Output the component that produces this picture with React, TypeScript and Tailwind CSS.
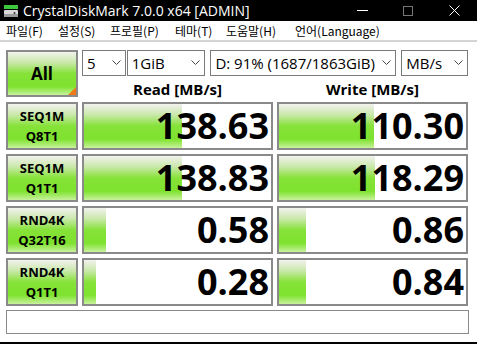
import React from "react";

const font = { fontFamily: '"Open Sans", "Noto Sans", "Noto Sans CJK KR", sans-serif' };
const kfont = { fontFamily: '"Noto Sans CJK KR", "Noto Sans", sans-serif' };

const grad = "bg-[linear-gradient(to_bottom,#f2f2ee_0%,#c8e8a8_25%,#86e238_50%,#7ee22e_80%,#c8f29c_100%)]";

function Label({ a, b }: { a: string; b: string }) {
  return (
    <div className={`h-[48px] border-2 border-[#8a8a8a] ${grad} flex flex-col items-center justify-center leading-[20px] text-[13px] font-bold text-black`} style={font}>
      <span>{a}</span>
      <span>{b}</span>
    </div>
  );
}

function Val({ v, w }: { v: string; w: number }) {
  return (
    <div className="relative h-[48px] border-2 border-[#8a8a8a] bg-white">
      <div className={`absolute left-0 top-0 bottom-0 ${grad}`} style={{ width: w }} />
      <div className="relative h-full flex items-center justify-end pr-[2px] text-[36px] font-bold text-black leading-none" style={font}>
        {v}
      </div>
    </div>
  );
}

function Select({ text, w }: { text: string; w: number }) {
  return (
    <div className="h-[26px] border border-[#7a7a7a] bg-white flex items-center justify-between pl-[4px] pr-[4px] text-[15px] text-black" style={{ width: w, ...font }}>
      <span className="whitespace-nowrap overflow-hidden">{text}</span>
      <svg width="9" height="6" viewBox="0 0 9 6" className="shrink-0 ml-[2px]">
        <path d="M0.5 0.5 L4.5 4.5 L8.5 0.5" fill="none" stroke="#444" strokeWidth="1" />
      </svg>
    </div>
  );
}

export default function App() {
  return (
    <div className="w-[477px] h-[344px] bg-white overflow-hidden relative">
      {/* Title bar */}
      <div className="h-[21px] bg-black flex items-center text-white">
        <svg width="16" height="14" viewBox="0 0 16 14" className="ml-[3px] mr-[4px]">
          <rect x="1" y="1" width="14" height="4" fill="#3cc83c" />
          <rect x="1" y="6" width="14" height="7" rx="1" fill="#d8d8d8" />
          <rect x="1" y="10" width="14" height="3" fill="#9a9a9a" />
          <circle cx="11.5" cy="9" r="1" fill="#333" />
        </svg>
        <span className="text-[14px] leading-none" style={font}>CrystalDiskMark 7.0.0 x64 [ADMIN]</span>
        <div className="ml-auto flex items-center h-full">
          <div className="w-[46px] flex justify-center">
            <div className="w-[11px] h-[1px] bg-white" />
          </div>
          <div className="w-[46px] flex justify-center">
            <div className="w-[10px] h-[10px] border border-[#777]" />
          </div>
          <div className="w-[46px] flex justify-center">
            <svg width="11" height="11" viewBox="0 0 11 11">
              <path d="M0.5 0.5 L10.5 10.5 M10.5 0.5 L0.5 10.5" stroke="white" strokeWidth="1" />
            </svg>
          </div>
        </div>
      </div>
      {/* Menu */}
      <div className="h-[21px] flex items-center text-[12px] text-black pl-[6px] border-b-2 border-[#d4d4d4]" style={kfont}>
        <span className="w-[52px]">파일(F)</span>
        <span className="w-[52px]">설정(S)</span>
        <span className="w-[65px]">프로필(P)</span>
        <span className="w-[51px]">테마(T)</span>
        <span className="w-[69px]">도움말(H)</span>
        <span>언어(Language)</span>
      </div>
      {/* Main */}
      <div className="pl-[6px] pt-[8px]">
        <div className="grid grid-cols-[72px_191px_191px] gap-x-[4px] gap-y-[4px]">
          <div className="relative h-[47px] border-2 border-[#8a8a8a] flex items-center justify-center text-[17px] font-bold text-black overflow-hidden" style={font}>
            <div className={`absolute inset-0 ${grad}`} />
            <span className="relative">All</span>
            <div className="absolute right-0 bottom-0 w-0 h-0 border-l-[8px] border-l-transparent border-b-[8px] border-b-[#f07818]" />
          </div>
          <div className="col-span-2 flex flex-col">
            <div className="flex items-center">
              <Select text="5" w={44} />
              <div className="w-[1px]" />
              <Select text="1GiB" w={79} />
              <div className="w-[5px]" />
              <Select text="D: 91% (1687/1863GiB)" w={187} />
              <div className="w-[5px]" />
              <Select text="MB/s" w={67} />
            </div>
            <div className="grid grid-cols-[191px_191px] gap-x-[4px] mt-[5px]">
              <div className="text-center text-[15px] font-bold leading-[17px]" style={font}>Read [MB/s]</div>
              <div className="text-center text-[15px] font-bold leading-[17px]" style={font}>Write [MB/s]</div>
            </div>
          </div>
          <Label a="SEQ1M" b="Q8T1" />
          <Val v="138.63" w={98} />
          <Val v="110.30" w={95} />
          <Label a="SEQ1M" b="Q1T1" />
          <Val v="138.83" w={98} />
          <Val v="118.29" w={96} />
          <Label a="RND4K" b="Q32T16" />
          <Val v="0.58" w={22} />
          <Val v="0.86" w={27} />
          <Label a="RND4K" b="Q1T1" />
          <Val v="0.28" w={12} />
          <Val v="0.84" w={27} />
          <div className="col-span-3 h-[24px] border border-[#8a8a8a] w-[463px]" />
        </div>
      </div>
      <div className="absolute left-0 right-0 bottom-0 h-[2px] bg-black" />
    </div>
  );
}
